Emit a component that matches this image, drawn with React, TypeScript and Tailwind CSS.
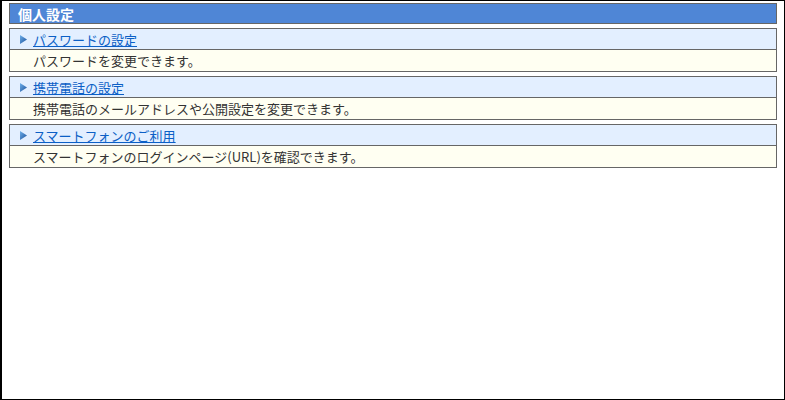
import React from "react";

const items = [
  { title: "パスワードの設定", desc: "パスワードを変更できます。" },
  { title: "携帯電話の設定", desc: "携帯電話のメールアドレスや公開設定を変更できます。" },
  { title: "スマートフォンのご利用", desc: "スマートフォンのログインページ(URL)を確認できます。" },
];

function Tri() {
  return (
    <svg width="7" height="9" viewBox="0 0 7 9" className="shrink-0">
      <defs>
        <linearGradient id="tg" x1="0" y1="0" x2="1" y2="1">
          <stop offset="0" stopColor="#6fb0ea" />
          <stop offset="1" stopColor="#1a4f9a" />
        </linearGradient>
      </defs>
      <polygon points="0,0 7,4.5 0,9" fill="url(#tg)" />
    </svg>
  );
}

export default function App() {
  return (
    <div
      className="w-[785px] h-[400px] bg-white border-black border-t border-r border-b border-l-2 pt-[2px] px-[7px] flex flex-col gap-[4px]"
      style={{ fontFamily: '"MS PGothic", "Noto Sans CJK JP", sans-serif' }}
    >
      <div className="h-[21px] border border-[#666] bg-[#4f86d6] flex items-center pl-[8px] text-white font-bold text-[14px] leading-none">
        個人設定
      </div>
      {items.map((it) => (
        <div key={it.title} className="border border-[#666] flex flex-col">
          <div className="h-[20px] bg-[#e3efff] flex items-center pl-[10px] gap-[6px] text-[13px] leading-none">
            <Tri />
            <a href="#" className="text-[#0b5fc6] underline underline-offset-[1px]">
              {it.title}
            </a>
          </div>
          <div className="h-[22px] border-t border-[#666] bg-[#fffff2] flex items-center pl-[23px] text-[13px] leading-none text-[#333]">
            {it.desc}
          </div>
        </div>
      ))}
    </div>
  );
}
